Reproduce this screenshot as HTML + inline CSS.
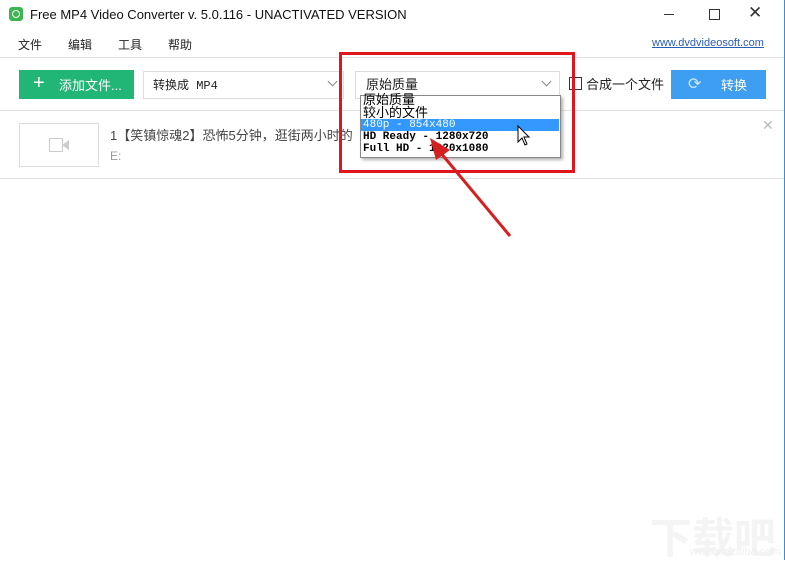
<!DOCTYPE html>
<html><head><meta charset="utf-8"><style>
body{margin:0;width:785px;height:560px;background:#fff;position:relative;overflow:hidden;font-family:"Liberation Sans","Noto Sans CJK SC",sans-serif;font-size:12px;color:#222}
.a{position:absolute}
.m{font-family:"Liberation Mono","Noto Sans CJK SC",monospace}
</style></head><body>
<div class="a" style="left:0;top:0;width:784px;height:560px;border-right:1px solid #3c8cd8"></div>
<div class="a" style="left:9px;top:7px;width:14px;height:14px;border-radius:3px;background:#3cb650"></div>
<div class="a" style="left:12px;top:10px;width:6px;height:6px;border:1.5px solid #fff;border-radius:50%"></div>
<div class="a" style="left:30px;top:7px;font-size:13px;color:#111">Free MP4 Video Converter v. 5.0.116 - UNACTIVATED VERSION</div>
<div class="a" style="left:664px;top:14px;width:10px;height:1px;background:#333"></div>
<div class="a" style="left:709px;top:9px;width:9px;height:9px;border:1px solid #333"></div>
<div class="a" style="left:748px;top:3px;font-size:17px;color:#333">✕</div>
<div class="a" style="left:18px;top:36px;font-size:12px">文件</div>
<div class="a" style="left:68px;top:36px">编辑</div>
<div class="a" style="left:118px;top:36px">工具</div>
<div class="a" style="left:168px;top:36px">帮助</div>
<div class="a" style="left:652px;top:37px;font-size:11px;color:#2a5db0;text-decoration:underline">www.dvdvideosoft.com</div>
<div class="a" style="left:0;top:57px;width:784px;height:1px;background:#e2e2e2"></div>
<div class="a" style="left:19px;top:70px;width:115px;height:29px;background:#21b576"></div>
<div class="a" style="left:33px;top:76px;color:#fff;font-size:20px;line-height:14px">+</div>
<div class="a" style="left:59px;top:75px;color:#fff;font-size:13px">添加文件...</div>
<div class="a" style="left:143px;top:71px;width:199px;height:26px;border:1px solid #ddd"></div>
<div class="a m" style="left:153px;top:76px;font-size:12px">转换成 MP4</div>
<div class="a" style="left:329px;top:78px;width:6px;height:6px;border-right:1.5px solid #888;border-bottom:1.5px solid #888;transform:rotate(45deg)"></div>
<div class="a" style="left:355px;top:71px;width:203px;height:26px;border:1px solid #ddd"></div>
<div class="a" style="left:366px;top:74px;font-size:13px">原始质量</div>
<div class="a" style="left:543px;top:78px;width:6px;height:6px;border-right:1.5px solid #888;border-bottom:1.5px solid #888;transform:rotate(45deg)"></div>
<div class="a" style="left:569px;top:77px;width:11px;height:11px;border:1px solid #333"></div>
<div class="a" style="left:586px;top:74px;font-size:13px">合成一个文件</div>
<div class="a" style="left:671px;top:70px;width:95px;height:29px;background:#3d9ef2"></div>
<div class="a" style="left:688px;top:74px;color:#cfe6fb;font-size:16px">⟳</div>
<div class="a" style="left:721px;top:75px;color:#fff;font-size:13px">转换</div>
<div class="a" style="left:0;top:110px;width:784px;height:1px;background:#e2e2e2"></div>
<div class="a" style="left:19px;top:123px;width:78px;height:42px;border:1px solid #ddd"></div>
<div class="a" style="left:49px;top:138px;width:12px;height:12px;border:1px solid #ccc"></div>
<div class="a" style="left:62px;top:140px;width:0;height:0;border-top:5px solid transparent;border-bottom:5px solid transparent;border-right:7px solid #ccc"></div>
<div class="a" style="left:110px;top:125px;font-size:13px;color:#444">1【笑镇惊魂2】恐怖5分钟，逛街两小时的</div>
<div class="a" style="left:110px;top:149px;font-size:12px;color:#999">E:</div>
<div class="a" style="left:762px;top:117px;font-size:14px;color:#bbb">✕</div>
<div class="a" style="left:0;top:178px;width:784px;height:1px;background:#e2e2e2"></div>
<div class="a" style="left:360px;top:95px;width:199px;height:61px;background:#fff;border:1px solid #888;box-shadow:2px 2px 3px rgba(0,0,0,.3)"></div>
<div class="a" style="left:363px;top:93px;font-size:13px;line-height:13px;color:#000">原始质量</div>
<div class="a" style="left:363px;top:106px;font-size:13px;line-height:13px;color:#000">较小的文件</div>
<div class="a" style="left:361px;top:119px;width:198px;height:12px;background:#3399ff"></div>
<div class="a m" style="left:363px;top:119px;font-size:11px;line-height:12px;color:#fff">480p - 854x480</div>
<div class="a m" style="left:363px;top:131px;font-size:11px;line-height:12px;color:#000;font-weight:bold">HD Ready - 1280x720</div>
<div class="a m" style="left:363px;top:143px;font-size:11px;line-height:12px;color:#000;font-weight:bold">Full HD - 1920x1080</div>
<div class="a" style="left:339px;top:52px;width:230px;height:115px;border:3px solid #e0161c"></div>
<svg class="a" style="left:0;top:0" width="785" height="560"><line x1="510" y1="236" x2="440" y2="152" stroke="#d42020" stroke-width="3"/><polygon points="430,138 450,150 436,160" fill="#d42020"/>
<path d="M518 126 L518 142 L522 138 L525 145 L527 144 L524 137 L529 137 Z" fill="#fff" stroke="#000" stroke-width="1"/></svg>
<div class="a" style="left:650px;top:505px;font-size:42px;color:#f4f4f4;font-weight:bold">下载吧</div>
<div class="a" style="left:690px;top:546px;font-size:11px;color:#f0f0f0">www.xiazaiba.com</div>
</body></html>
